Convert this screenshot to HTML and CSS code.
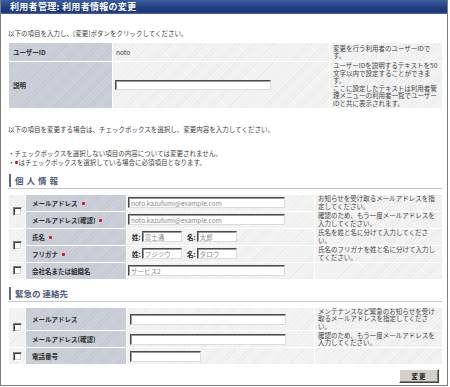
FILE: index.html
```
<!DOCTYPE html>
<html lang="ja">
  <head>
    <meta charset="UTF-8" />
    <title>利用者管理: 利用者情報の変更</title>
    <link rel="stylesheet" href="styles.css">
  </head>
  <body>
    <div class="panel">
      <div class="panel-head">利用者管理: 利用者情報の変更</div>

      <div class="panel-body">
        <p class="intro">以下の項目を入力し、[変更]ボタンをクリックしてください。</p>

        <table class="form-table">
          <colgroup>
            <col style="width: 104px">
            <col style="width: 217px">
            <col style="width: 113px">
          </colgroup>
          <tr class="row-id">
            <th>ユーザーID</th>
            <td class="val">noto</td>
            <td class="desc">変更を行う利用者のユーザーIDです。</td>
          </tr>
          <tr class="row-note">
            <th>説明</th>
            <td class="val"><input class="txt txt-note" type="text" value=""></td>
            <td class="desc">ユーザーIDを説明するテキストを50文字以内で設定することができます。<br>ここに設定したテキストは利用者管理メニューの利用者一覧でユーザーIDと共に表示されます。</td>
          </tr>
        </table>

        <p class="lead">以下の項目を変更する場合は、チェックボックスを選択し、変更内容を入力してください。</p>
        <ul class="notes">
          <li>・チェックボックスを選択しない項目の内容については変更されません。</li>
          <li>・<span class="req"></span>はチェックボックスを選択している場合に必須項目となります。</li>
        </ul>

        <div class="section"><span class="section-title spaced">個人情報</span></div>

        <table class="form-table">
          <colgroup>
            <col style="width: 17px">
            <col style="width: 101px">
            <col style="width: 188px">
            <col style="width: 128px">
          </colgroup>
          <tr>
            <td class="chk" rowspan="2"><span class="check"></span></td>
            <th>メールアドレス<span class="req"></span></th>
            <td class="val"><input class="txt txt-long" type="text" value="noto.kazufumi@example.com"></td>
            <td class="desc">お知らせを受け取るメールアドレスを指定してください。</td>
          </tr>
          <tr>
            <th>メールアドレス(確認)<span class="req"></span></th>
            <td class="val"><input class="txt txt-long" type="text" value="noto.kazufumi@example.com"></td>
            <td class="desc">確認のため、もう一度メールアドレスを入力してください。</td>
          </tr>
          <tr>
            <td class="chk" rowspan="2"><span class="check"></span></td>
            <th>氏名<span class="req"></span></th>
            <td class="val">
              <span class="part">姓:</span><input class="txt txt-short" type="text" value="富士通">
              <span class="part">名:</span><input class="txt txt-short" type="text" value="太郎">
            </td>
            <td class="desc">氏名を姓と名に分けて入力してください。</td>
          </tr>
          <tr>
            <th>フリガナ<span class="req"></span></th>
            <td class="val">
              <span class="part">姓:</span><input class="txt txt-short" type="text" value="フジツウ">
              <span class="part">名:</span><input class="txt txt-short" type="text" value="タロウ">
            </td>
            <td class="desc">氏名のフリガナを姓と名に分けて入力してください。</td>
          </tr>
          <tr>
            <td class="chk"><span class="check"></span></td>
            <th>会社名または組織名</th>
            <td class="val"><input class="txt txt-long" type="text" value="サービス2"></td>
            <td class="desc"></td>
          </tr>
        </table>

        <div class="section"><span class="section-title">緊急の 連絡先</span></div>

        <table class="form-table">
          <colgroup>
            <col style="width: 17px">
            <col style="width: 101px">
            <col style="width: 188px">
            <col style="width: 128px">
          </colgroup>
          <tr>
            <td class="chk" rowspan="2"><span class="check"></span></td>
            <th>メールアドレス</th>
            <td class="val"><input class="txt txt-mail" type="text" value=""></td>
            <td class="desc">メンテナンスなど緊急のお知らせを受け取るメールアドレスを指定してください。</td>
          </tr>
          <tr>
            <th>メールアドレス(確認)</th>
            <td class="val"><input class="txt txt-mail" type="text" value=""></td>
            <td class="desc">確認のため、もう一度メールアドレスを入力してください。</td>
          </tr>
          <tr>
            <td class="chk"><span class="check"></span></td>
            <th>電話番号</th>
            <td class="val"><input class="txt txt-tel" type="text" value=""></td>
            <td class="desc"></td>
          </tr>
        </table>

        <div class="actions">
          <button class="btn" type="button">変更</button>
        </div>
      </div>
    </div>
  </body>
</html>
```

FILE: styles.css
```
* {
  padding: 0;
  margin: 0;
  box-sizing: border-box;
}

body {
  font-family: "Noto Sans CJK JP", "Noto Sans", sans-serif;
  font-size: 6.5px;
  color: #3c3c3c;
  background-color: #ffffff;
}

/* marco exterior */
.panel {
  width: 448px;
  height: 386px;
  border: 1px solid #7d7d7d;
  border-top: none;
}

.panel-head {
  height: 14px;
  padding-left: 9px;
  background: linear-gradient(to bottom, #3d5d9e 0%, #213f80 55%, #1c3677 85%, #4a66a0 100%);
  color: #ffffff;
  font-size: 9px;
  font-weight: bold;
  line-height: 14px;
  letter-spacing: 0.3px;
}

.panel-body {
  padding: 0 5px 0 7px;
}

.intro {
  margin-top: 15px;
  line-height: 8px;
}

.lead {
  margin-top: 16px;
  line-height: 8px;
}

.notes {
  list-style: none;
  margin-top: 16px;
  line-height: 9px;
}

/* marca de obrigatório */
.req {
  display: inline-block;
  width: 3px;
  height: 3px;
  margin: 0 1px 1px 4px;
  background-color: #e0141e;
  border-radius: 1px;
  vertical-align: middle;
}

.notes .req {
  margin: 0 1px 1px 0;
}

/* títulos de seção */
.section {
  margin-top: 7px;
  padding-bottom: 1px;
  border-bottom: 1px solid #c9c9c9;
}

.section-title {
  display: block;
  margin-left: 1px;
  padding-left: 4px;
  border-left: 2px solid #5c6b90;
  color: #4e5b7e;
  font-size: 8.5px;
  font-weight: bold;
  line-height: 13px;
}

.section-title.spaced {
  letter-spacing: 3px;
}

/* tabelas do formulário */
.form-table {
  width: 434px;
  margin-top: 5px;
  table-layout: fixed;
  border-collapse: collapse;
  border: 1px solid #d6d6d6;
}

.form-table th,
.form-table td {
  height: 17px;
  border: 1px solid #ffffff;
  vertical-align: middle;
  text-align: left;
}

.form-table th {
  padding: 0 6px;
  background: repeating-linear-gradient(135deg, #cdd1da 0 2px, #c2c6d0 2px 3px);
  color: #2e2e2e;
  font-weight: bold;
  white-space: nowrap;
}

.form-table .val {
  padding: 0 1px;
  background: repeating-linear-gradient(135deg, #f5f5f5 0 2px, #eaeaea 2px 3px);
  white-space: nowrap;
}

.form-table .desc {
  padding: 0 3px;
  background: repeating-linear-gradient(135deg, #f5f5f5 0 2px, #eaeaea 2px 3px);
  color: #444444;
  line-height: 7.5px;
}

.form-table .chk {
  padding-left: 4px;
  background: repeating-linear-gradient(135deg, #f5f5f5 0 2px, #eaeaea 2px 3px);
}

.row-id th,
.row-id td {
  height: 19px;
}

.row-id th {
  padding-left: 4px;
}

.row-id .val {
  padding-left: 3px;
}

.row-note th,
.row-note td {
  height: 46px;
}

.row-note th {
  padding-left: 4px;
}

.row-note .val {
  padding-left: 2px;
}

.row-note .desc {
  line-height: 7.6px;
}

/* checkbox no estilo antigo */
.check {
  display: block;
  width: 9px;
  height: 9px;
  background-color: #ffffff;
  border: 1px solid;
  border-color: #808080 #ffffff #ffffff #808080;
  box-shadow: inset 1px 1px 0 #404040, inset -1px -1px 0 #d4d0c8;
}

/* campos de texto */
.txt {
  height: 11px;
  padding: 0 2px;
  border: 1px solid;
  border-color: #4a4a4a #dcdcdc #dcdcdc #4a4a4a;
  box-shadow: inset 1px 1px 0 #9a9a9a;
  background-color: #ffffff;
  color: #8a8a8a;
  font-family: "Noto Sans CJK JP", "Noto Sans", sans-serif;
  font-size: 6.5px;
  vertical-align: middle;
  outline: none;
}

.txt-note {
  width: 156px;
  height: 10px;
}

.txt-long {
  width: 157px;
}

.txt-mail {
  width: 156px;
  margin-left: 2px;
}

.txt-tel {
  width: 71px;
  margin-left: 2px;
}

.txt-short {
  width: 40px;
}

.part {
  display: inline-block;
  margin: 0 1px 0 4px;
  color: #2e2e2e;
  font-weight: bold;
  vertical-align: middle;
}

/* botão */
.actions {
  display: flex;
  justify-content: flex-end;
  margin-top: 4px;
  padding-right: 3px;
}

.btn {
  width: 40px;
  height: 14px;
  background-color: #d4d0c8;
  border: 1px solid;
  border-color: #ffffff #404040 #404040 #ffffff;
  box-shadow: inset -1px -1px 0 #808080;
  color: #222222;
  font-family: "Noto Sans CJK JP", "Noto Sans", sans-serif;
  font-size: 6.5px;
  font-weight: bold;
  letter-spacing: 1px;
  cursor: pointer;
}
```
